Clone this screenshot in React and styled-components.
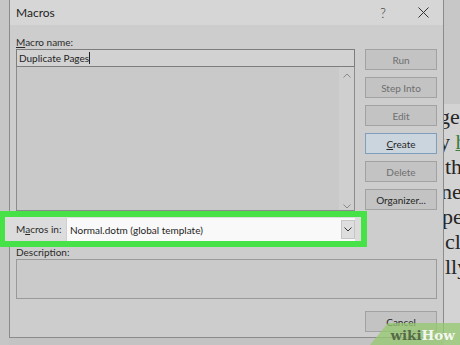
import React from "react";
import styled, { createGlobalStyle } from "styled-components";

const GlobalStyle = createGlobalStyle`
  html, body {
    margin: 0;
    padding: 0;
  }
  body {
    width: 460px;
    height: 345px;
    overflow: hidden;
    background: #c3c3c3;
    font-family: Lato, "Noto Sans", sans-serif;
    color: #242424;
  }
`;

// page behind the dialog
const Screen = styled.div`
  position: relative;
  display: flex;
  width: 460px;
  height: 345px;
  overflow: hidden;
  background: #c3c3c3;
`;

const LeftEdge = styled.div`
  flex: none;
  width: 9px;
  background: #c6c6c6;
`;

const RightEdge = styled.div`
  flex: 1;
  display: flex;
  flex-direction: column;
  min-width: 0;
  background: #c7c7c7;
`;

const DocPage = styled.div`
  flex: 1;
  margin-top: 104px;
  overflow: hidden;
  background: #d3d3d3;
  font-family: "Liberation Serif", serif;
  font-size: 22px;
  line-height: 25px;
  color: #262626;
  white-space: nowrap;
`;

const DocLine = styled.div`
  margin-left: ${(p) => p.$shift}px;
`;

const DocLink = styled.span`
  color: #3d7f3d;
  text-decoration: underline;
  text-decoration-thickness: 1px;
`;

// dialog
const Dialog = styled.div`
  flex: none;
  box-sizing: border-box;
  width: 435px;
  height: 338px;
  display: flex;
  flex-direction: column;
  border: 1px solid #8b8b8b;
  border-top: none;
  background: #cdcdcd;
`;

const TitleBar = styled.div`
  display: flex;
  align-items: center;
  height: 25px;
  padding-left: 6px;
  background: #d6d6d6;
`;

const Title = styled.div`
  flex: 1;
  font-size: 12px;
  color: #1e1e1e;
`;

const HelpMark = styled.div`
  width: 12px;
  margin-right: 24px;
  text-align: center;
  font-size: 13px;
  font-weight: 300;
  color: #333;
`;

const CloseButton = styled.div`
  display: flex;
  align-items: center;
  justify-content: center;
  width: 20px;
  margin-right: 10px;
`;

const Body = styled.div`
  display: flex;
  flex-direction: column;
  padding: 0 6px;
`;

const Upper = styled.div`
  display: flex;
  gap: 10px;
`;

const MainCol = styled.div`
  display: flex;
  flex-direction: column;
  width: 339px;
`;

const FieldLabel = styled.div`
  height: 14px;
  padding-top: ${(p) => p.$top || 0}px;
  font-size: 10px;
  line-height: 14px;
  color: #2a2a2a;

  & u {
    text-decoration-thickness: 1px;
  }
`;

const NameBox = styled.div`
  box-sizing: border-box;
  display: flex;
  align-items: center;
  height: 18px;
  padding-left: 2px;
  border: 1px solid #7d7d7d;
  background: #d2d2d2;
  font-size: 10px;
  color: #1e1e1e;
`;

const Caret = styled.span`
  width: 1px;
  height: 12px;
  background: #222;
`;

const MacroList = styled.div`
  box-sizing: border-box;
  display: flex;
  justify-content: flex-end;
  height: 144px;
  border: 1px solid #8c8c8c;
  border-top: none;
  background: #c9c9c9;
`;

const ScrollTrack = styled.div`
  display: flex;
  flex-direction: column;
  justify-content: space-between;
  align-items: center;
  width: 15px;
  padding: 6px 0 1px;
  background: #cfcfcf;
`;

const ButtonCol = styled.div`
  display: flex;
  flex-direction: column;
  gap: 7px;
  padding-top: 24px;
`;

const Button = styled.div`
  box-sizing: border-box;
  display: flex;
  align-items: center;
  justify-content: center;
  width: 72px;
  height: 21px;
  border: 1px solid ${(p) => (p.$primary ? "#7f9ebd" : "#a2a2a2")};
  background: ${(p) => (p.$primary ? "#cbd5de" : "#c3c3c3")};
  font-size: 10px;
  color: ${(p) => (p.$enabled ? "#262626" : "#6f6f6f")};

  & u {
    text-decoration-thickness: 1px;
  }
`;

const HighlightRow = styled.div`
  display: flex;
  align-items: flex-end;
  width: 356px;
  height: 24px;
  box-sizing: border-box;
  margin: 6px 0 0 -11px;
  padding: 0 6px 0 11px;
  outline: 6px solid #47e247;
  background: #dcdcdc;
`;

const RowLabel = styled.div`
  width: 50px;
  align-self: center;
  font-size: 10px;
  color: #2a2a2a;

  & u {
    text-decoration-thickness: 1px;
  }
`;

const Dropdown = styled.div`
  box-sizing: border-box;
  flex: 1;
  display: flex;
  align-items: center;
  height: 23px;
  padding-left: 3px;
  border-left: 1px solid #cfcfcf;
  background: #f9f9f9;
  font-size: 10px;
  color: #1e1e1e;
`;

const DropText = styled.div`
  flex: 1;
`;

const DropButton = styled.div`
  box-sizing: border-box;
  display: flex;
  align-items: center;
  justify-content: center;
  width: 14px;
  height: 19px;
  border: 1px solid #c6c6c6;
  background: #dedede;
`;

const DescBox = styled.div`
  box-sizing: border-box;
  height: 40px;
  border: 1px solid #9a9a9a;
  background: #cacaca;
`;

const Footer = styled.div`
  display: flex;
  justify-content: flex-end;
  margin-top: 12px;
`;

// wikiHow watermark sits over the corner
const Watermark = styled.div`
  position: absolute;
  right: 0;
  bottom: 0;
  width: 90px;
  height: 22px;
  display: flex;
  align-items: flex-end;
  justify-content: flex-end;
  padding-right: 5px;
  box-sizing: border-box;
  background: rgba(150, 200, 112, 0.75);
  clip-path: polygon(20% 0, 100% 0, 100% 100%, 0 100%);
  font-family: "DejaVu Serif", "Liberation Serif", serif;
  font-weight: bold;
  font-size: 13.5px;
  line-height: 19px;
`;

const WikiPart = styled.span`
  color: #566a48;
`;

const HowPart = styled.span`
  color: #f4f7ef;
`;

function Chevron({ up, color = "#8a8a8a" }) {
  return (
    <svg width="8" height="5" viewBox="0 0 8 5">
      <path
        d={up ? "M0.5 4.5 L4 1 L7.5 4.5" : "M0.5 0.5 L4 4 L7.5 0.5"}
        fill="none"
        stroke={color}
        strokeWidth="1"
      />
    </svg>
  );
}

const buttons = [
  { label: "Run" },
  { label: "Step Into" },
  { label: "Edit" },
  { label: "Create", primary: true, enabled: true, key: "C" },
  { label: "Delete" },
  { label: "Organizer...", enabled: true },
];

export default function App() {
  return (
    <>
      <GlobalStyle />
      <Screen>
        <LeftEdge />
        <Dialog>
          <TitleBar>
            <Title>Macros</Title>
            <HelpMark>?</HelpMark>
            <CloseButton>
              <svg width="11" height="11" viewBox="0 0 11 11">
                <path d="M0.5 0.5 L10.5 10.5 M10.5 0.5 L0.5 10.5" stroke="#333" strokeWidth="1" />
              </svg>
            </CloseButton>
          </TitleBar>
          <Body>
            <Upper>
              <MainCol>
                <FieldLabel $top={10}>
                  <u>M</u>acro name:
                </FieldLabel>
                <NameBox>
                  Duplicate Pages
                  <Caret />
                </NameBox>
                <MacroList>
                  <ScrollTrack>
                    <Chevron up />
                    <Chevron />
                  </ScrollTrack>
                </MacroList>
              </MainCol>
              <ButtonCol>
                {buttons.map((b) => (
                  <Button key={b.label} $primary={b.primary} $enabled={b.enabled}>
                    {b.key ? (
                      <>
                        <u>{b.key}</u>
                        {b.label.slice(1)}
                      </>
                    ) : (
                      b.label
                    )}
                  </Button>
                ))}
              </ButtonCol>
            </Upper>
            <HighlightRow>
              <RowLabel>
                M<u>a</u>cros in:
              </RowLabel>
              <Dropdown>
                <DropText>Normal.dotm (global template)</DropText>
                <DropButton>
                  <Chevron color="#333" />
                </DropButton>
              </Dropdown>
            </HighlightRow>
            <FieldLabel $top={4}>Description:</FieldLabel>
            <DescBox />
            <Footer>
              <Button $enabled>Cancel</Button>
            </Footer>
          </Body>
        </Dialog>
        <RightEdge>
          <DocPage>
            <DocLine $shift={-5}>ge</DocLine>
            <DocLine $shift={-5}>
              y <DocLink>h</DocLink>
            </DocLine>
            <DocLine $shift={1}>th</DocLine>
            <DocLine $shift={-3}>ne</DocLine>
            <DocLine $shift={-2}>pe</DocLine>
            <DocLine $shift={1}>clu</DocLine>
            <DocLine $shift={1}>lly</DocLine>
          </DocPage>
        </RightEdge>
        <Watermark>
          <WikiPart>wiki</WikiPart>
          <HowPart>How</HowPart>
        </Watermark>
      </Screen>
    </>
  );
}
